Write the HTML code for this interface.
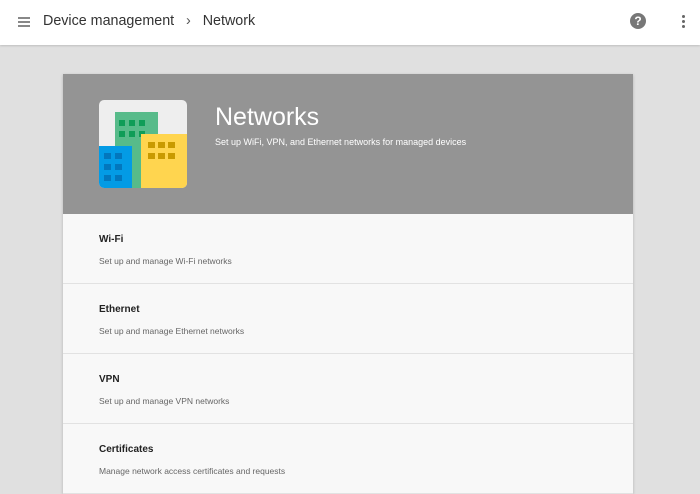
<!DOCTYPE html>
<html><head><style>
body{margin:0;width:700px;height:487px;overflow:hidden;background:#e0e0e0;font-family:"Liberation Sans",sans-serif;position:relative}
.top{position:absolute;left:0;top:0;width:700px;height:45px;background:#fff;box-shadow:0 1px 2px rgba(0,0,0,.15)}
.card{position:absolute;left:63px;top:74px;width:570px;height:420px;background:#f8f8f8;box-shadow:0 1px 3px rgba(0,0,0,.2)}
.hd{height:140px;background:#949494;position:relative}
.row{height:69px;border-bottom:1px solid #e2e2e2;position:relative}
.row b{position:absolute;left:36px;top:20px;font-size:10px;color:#222}
.row span{position:absolute;left:36px;top:42px;font-size:8.5px;color:#666}
</style></head><body>
<div class="top">
<div style="position:absolute;left:18px;top:17px;width:12px;height:2px;background:#888;box-shadow:0 4px 0 #888,0 8px 0 #888"></div>
<div style="position:absolute;left:43px;top:13px;font-size:14.3px;color:#333">Device management&nbsp;&nbsp;&nbsp;<span style="color:#555">›</span>&nbsp;&nbsp;&nbsp;Network</div>
<div style="position:absolute;left:630px;top:13px;width:16px;height:16px;border-radius:50%;background:#777;color:#fff;font-size:12px;font-weight:bold;text-align:center;line-height:16px">?</div>
<div style="position:absolute;left:682px;top:15px;width:3px;height:3px;border-radius:50%;background:#666;box-shadow:0 5px 0 #666,0 10px 0 #666"></div>
</div>
<div class="card">
<div class="hd">
<svg style="position:absolute;left:36px;top:26px" width="88" height="88">
<rect width="88" height="88" rx="5" fill="#eee"/>
<rect x="16" y="12" width="43" height="76" fill="#57bb8a"/>
<g fill="#0f9d58"><rect x="20" y="20" width="6" height="6"/><rect x="30" y="20" width="6" height="6"/><rect x="40" y="20" width="6" height="6"/><rect x="20" y="31" width="6" height="6"/><rect x="30" y="31" width="6" height="6"/><rect x="40" y="31" width="6" height="6"/></g>
<path d="M0 46H33V88H5A5 5 0 0 1 0 83Z" fill="#039be5"/>
<g fill="#0277bd"><rect x="5" y="53" width="7" height="6"/><rect x="16" y="53" width="7" height="6"/><rect x="5" y="64" width="7" height="6"/><rect x="16" y="64" width="7" height="6"/><rect x="5" y="75" width="7" height="6"/><rect x="16" y="75" width="7" height="6"/></g>
<path d="M42 34H88V83A5 5 0 0 1 83 88H42Z" fill="#ffd54f"/>
<g fill="#c99a00"><rect x="49" y="42" width="7" height="6"/><rect x="59" y="42" width="7" height="6"/><rect x="69" y="42" width="7" height="6"/><rect x="49" y="53" width="7" height="6"/><rect x="59" y="53" width="7" height="6"/><rect x="69" y="53" width="7" height="6"/></g>
</svg>
<div style="position:absolute;left:152px;top:29px;font-size:25px;color:#fff">Networks</div>
<div style="position:absolute;left:152px;top:63px;font-size:9px;color:#fff">Set up WiFi, VPN, and Ethernet networks for managed devices</div>
</div>
<div class="row"><b>Wi-Fi</b><span>Set up and manage Wi-Fi networks</span></div>
<div class="row"><b>Ethernet</b><span>Set up and manage Ethernet networks</span></div>
<div class="row"><b>VPN</b><span>Set up and manage VPN networks</span></div>
<div class="row"><b>Certificates</b><span>Manage network access certificates and requests</span></div>
</div>
</body></html>
